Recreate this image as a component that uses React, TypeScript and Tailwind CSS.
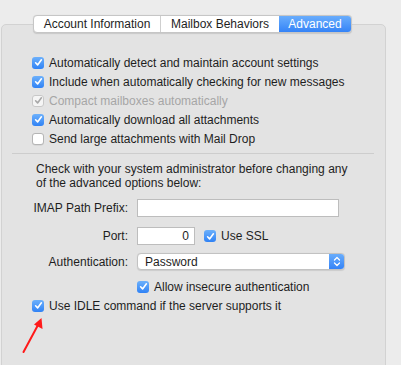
import React from "react";

function Check({ state = "on" }: { state?: "on" | "off" | "disabled" }) {
  if (state === "off") {
    return <div className="h-[12px] w-[12px] shrink-0 rounded-[3px] border border-[#b5b5b5] bg-white shadow-[0_0.5px_0.5px_rgba(0,0,0,0.1)]" />;
  }
  const disabled = state === "disabled";
  return (
    <div
      className={
        disabled
          ? "flex h-[12px] w-[12px] shrink-0 items-center justify-center rounded-[3px] border border-[#c8c8c8] bg-[#f5f5f5]"
          : "flex h-[12px] w-[12px] shrink-0 items-center justify-center rounded-[3px] bg-gradient-to-b from-[#6cb0fb] to-[#2f82f5]"
      }
    >
      <svg width="9" height="9" viewBox="0 0 9 9">
        <path
          d="M1.6 4.8 L3.6 6.9 L7.4 1.8"
          fill="none"
          stroke={disabled ? "#a8a8a8" : "#ffffff"}
          strokeWidth="1.6"
          strokeLinecap="round"
          strokeLinejoin="round"
        />
      </svg>
    </div>
  );
}

function Row({ state, children }: { state?: "on" | "off" | "disabled"; children: React.ReactNode }) {
  return (
    <div className="flex h-[19px] items-center gap-[5px] pl-[30px]">
      <Check state={state} />
      <span className={state === "disabled" ? "text-[#a6a6a6]" : ""}>{children}</span>
    </div>
  );
}

export default function App() {
  return (
    <div className="relative h-[365px] w-[401px] overflow-hidden bg-[#ececec] pt-[15px] font-['Liberation_Sans',Arial,sans-serif] text-[12px] leading-[14px] text-[#1e1e1e]">
      <div className="relative z-10 ml-[33px] flex h-[18px] w-[319px] overflow-hidden rounded-[4px] border border-[#c6c6c6] bg-white shadow-[0_0.5px_1px_rgba(0,0,0,0.12)]">
        <div className="flex w-[127px] items-center justify-center border-r border-[#cfcfcf]">Account Information</div>
        <div className="flex w-[118px] items-center justify-center">Mailbox Behaviors</div>
        <div className="flex flex-1 items-center justify-center bg-gradient-to-b from-[#69adfc] to-[#3483f7] text-white">Advanced</div>
      </div>
      <div className="-mt-[9px] ml-[1px] h-[400px] w-[385px] rounded-[5px] border border-[#d2d2d2] bg-[#e3e3e3] pt-[28px]">
        <Row state="on">Automatically detect and maintain account settings</Row>
        <Row state="on">Include when automatically checking for new messages</Row>
        <Row state="disabled">Compact mailboxes automatically</Row>
        <Row state="on">Automatically download all attachments</Row>
        <Row state="off">Send large attachments with Mail Drop</Row>
        <div className="ml-[10px] mt-[5px] h-px w-[362px] bg-[#cdcdcd]" />
        <div className="mt-[8px] pl-[34px]">
          Check with your system administrator before changing any
          <br />
          of the advanced options below:
        </div>
        <div className="mt-[9px] flex h-[18px] items-center">
          <div className="w-[127px] pr-[1px] text-right">IMAP Path Prefix:</div>
          <div className="ml-[8px] h-[18px] w-[202px] border border-[#bdbdbd] bg-white" />
        </div>
        <div className="mt-[10px] flex h-[18px] items-center">
          <div className="w-[127px] pr-[1px] text-right">Port:</div>
          <div className="ml-[8px] flex h-[18px] w-[58px] items-center justify-end border border-[#bdbdbd] bg-white pr-[5px]">0</div>
          <div className="ml-[9px] flex items-center gap-[5px]">
            <Check state="on" />
            <span>Use SSL</span>
          </div>
        </div>
        <div className="mt-[8px] flex h-[17px] items-center">
          <div className="w-[127px] pr-[1px] text-right">Authentication:</div>
          <div className="ml-[8px] flex h-[17px] w-[208px] overflow-hidden rounded-[4px] border border-[#c2c2c2] bg-white shadow-[0_0.5px_1px_rgba(0,0,0,0.1)]">
            <div className="flex flex-1 items-center pl-[7px]">Password</div>
            <div className="flex w-[15px] items-center justify-center bg-gradient-to-b from-[#69adfc] to-[#3483f7]">
              <svg width="8" height="11" viewBox="0 0 8 11">
                <path d="M1.5 4 L4 1.5 L6.5 4 M1.5 7 L4 9.5 L6.5 7" fill="none" stroke="#fff" strokeWidth="1.3" strokeLinecap="round" strokeLinejoin="round" />
              </svg>
            </div>
          </div>
        </div>
        <div className="mt-[7px] flex h-[19px] items-center gap-[5px] pl-[135px]">
          <Check state="on" />
          <span>Allow insecure authentication</span>
        </div>
        <Row state="on">Use IDLE command if the server supports it</Row>
      </div>
      <svg className="absolute left-0 top-0" width="401" height="365" viewBox="0 0 401 365">
        <line x1="23.5" y1="352" x2="38" y2="325" stroke="#ff1a1a" strokeWidth="2" strokeLinecap="round" />
        <polygon points="41.5,318 42.5,329 34,324.5" fill="#ff1a1a" />
      </svg>
    </div>
  );
}
